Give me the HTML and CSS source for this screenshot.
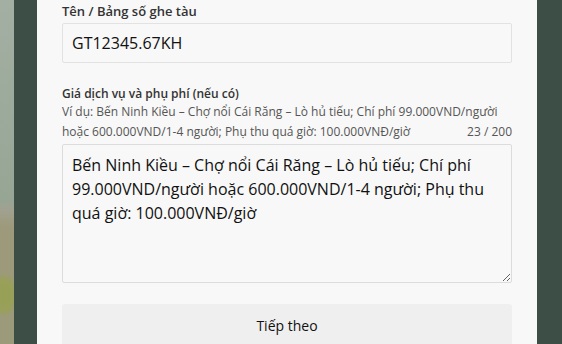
FILE: index.html
```html
<!DOCTYPE html>
<html lang="vi">
<head>
    <meta charset="UTF-8">
    <meta name="viewport" content="width=device-width, initial-scale=1.0">
    <title>Thông tin ghe tàu</title>
    <link rel="stylesheet" href="styles.css">
</head>
<body>
    <div class="photo"></div>

    <div class="frame">
        <form class="panel">
            <div class="field">
                <label class="field-label" for="boat">Tên / Bảng số ghe tàu</label>
                <input class="text-input" id="boat" type="text" value="GT12345.67KH">
            </div>

            <div class="field field-fees">
                <label class="field-label" for="fees">Giá dịch vụ và phụ phí (nếu có)</label>
                <div class="hint-row">
                    <span class="counter">23 / 200</span>
                    <p class="hint">Ví dụ: Bến Ninh Kiều – Chợ nổi Cái Răng – Lò hủ tiếu; Chí phí 99.000VND/người hoặc 600.000VND/1-4 người; Phụ thu quá giờ: 100.000VNĐ/giờ</p>
                </div>
                <textarea class="text-area" id="fees">Bến Ninh Kiều – Chợ nổi Cái Răng – Lò hủ tiếu; Chí phí 99.000VND/người hoặc 600.000VND/1-4 người; Phụ thu quá giờ: 100.000VNĐ/giờ</textarea>
            </div>

            <button class="next-btn" type="button">Tiếp theo</button>
        </form>
    </div>
</body>
</html>
```

FILE: styles.css
```css
* {
    margin: 0;
    padding: 0;
    box-sizing: border-box;
}

body {
    display: flex;
    height: 344px;
    overflow: hidden;
    font-family: "Open Sans", "Noto Sans", sans-serif;
    color: #222;
    background: #3d4e47;
}

.photo {
    width: 14px;
    flex-shrink: 0;
    background:
        radial-gradient(ellipse 14px 22px at 4px 295px, #97a055 0%, #98a05a 70%, rgba(155,154,122,0) 100%),
        linear-gradient(180deg, #a3afa3 0%, #9aa999 40%, #96a594 58%, #a1a190 61%, #9c9a7a 66%, #9b9a7a 100%);
}

.frame {
    flex: 1;
    padding: 0 25px 0 23px;
}

.panel {
    height: 100%;
    background: #f8f8f8;
    padding: 3px 25px 0 25px;
    display: flex;
    flex-direction: column;
}

.field {
    flex-shrink: 0;
}

.field-label {
    display: block;
    font-size: 13px;
    font-weight: 600;
    color: #333;
    line-height: 16px;
    margin-bottom: 4px;
}

.text-input {
    width: 100%;
    height: 40px;
    padding: 0 9px;
    border: 1px solid #e2e2e2;
    border-radius: 2px;
    background: #f8f8f8;
    font-family: inherit;
    font-size: 16px;
    color: #111;
}

.field-fees {
    margin-top: 23px;
}

.field-fees .field-label {
    font-size: 12px;
    margin-bottom: 0;
}

.hint-row {
    display: grid;
    grid-template-columns: 1fr auto;
    align-items: end;
}

.hint,
.counter {
    grid-row: 1;
    grid-column: 1 / 3;
    font-size: 12px;
    line-height: 20px;
    color: #555;
}

.counter {
    justify-self: end;
}

.hint {
    padding-right: 0;
}

.text-area {
    display: block;
    width: 100%;
    height: 139px;
    margin-top: 2px;
    padding: 8px 9px;
    border: 1px solid #dcdcdc;
    border-radius: 2px;
    background: #f8f8f8;
    font-family: inherit;
    font-size: 16px;
    line-height: 24px;
    color: #111;
    resize: vertical;
}

.next-btn {
    flex-shrink: 0;
    margin-top: 21px;
    width: 100%;
    height: 42px;
    border: none;
    border-radius: 3px;
    background: #efefef;
    font-family: inherit;
    font-size: 14px;
    color: #111;
}
```
